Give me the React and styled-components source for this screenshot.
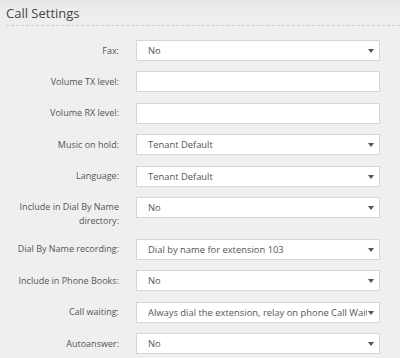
import styled, { createGlobalStyle } from "styled-components";

const GlobalStyle = createGlobalStyle`
  html, body {
    margin: 0;
    padding: 0;
    background: #eeeeee;
  }
  body {
    font-family: "Open Sans", "Liberation Sans", sans-serif;
  }
`;

const Page = styled.div`
  width: 400px;
  height: 358px;
  overflow: hidden;
  background: linear-gradient(to bottom, #e4e4e4 0px, #ededed 10px, #efefef 40px);
`;

const Header = styled.div`
  margin-left: 6px;
  padding: 5px 0 3px;
  border-bottom: 1px dashed #cfcfcf;
  font-size: 13px;
  line-height: 17px;
  color: #444;
`;

const Form = styled.div`
  display: grid;
  grid-template-columns: 105px 244px;
  column-gap: 17px;
  row-gap: 10.4px;
  padding: 14px 0 0 14px;
  align-items: start;
`;

const Label = styled.div`
  font-size: 9px;
  line-height: 14px;
  color: #555;
  text-align: right;
  padding-top: 3.5px;
`;

const Box = styled.div`
  position: relative;
  box-sizing: border-box;
  height: 21px;
  background: #fff;
  border: 1px solid #d6d6d6;
  padding: 0 12px 0 11px;
  display: flex;
  align-items: center;

  ${({ $select }) =>
    $select &&
    `
    &::after {
      content: "";
      position: absolute;
      right: 5px;
      top: 8px;
      border-left: 3px solid transparent;
      border-right: 3px solid transparent;
      border-top: 4px solid #555;
    }
  `}
`;

const Value = styled.span`
  font-size: 9.4px;
  line-height: 19px;
  color: #555;
  white-space: nowrap;
  overflow: hidden;
`;

const rows = [
  { label: "Fax:", value: "No", select: true },
  { label: "Volume TX level:", value: "" },
  { label: "Volume RX level:", value: "" },
  { label: "Music on hold:", value: "Tenant Default", select: true },
  { label: "Language:", value: "Tenant Default", select: true },
  { label: "Include in Dial By Name directory:", value: "No", select: true },
  { label: "Dial By Name recording:", value: "Dial by name for extension 103", select: true },
  { label: "Include in Phone Books:", value: "No", select: true },
  {
    label: "Call waiting:",
    value: "Always dial the extension, relay on phone Call Waiting",
    select: true,
  },
  { label: "Autoanswer:", value: "No", select: true },
];

export default function App() {
  return (
    <Page>
      <GlobalStyle />
      <Header>Call Settings</Header>
      <Form>
        {rows.map((row) => (
          <>
            <Label key={row.label + "-l"}>{row.label}</Label>
            <Box key={row.label + "-f"} $select={row.select}>
              <Value>{row.value}</Value>
            </Box>
          </>
        ))}
      </Form>
    </Page>
  );
}
